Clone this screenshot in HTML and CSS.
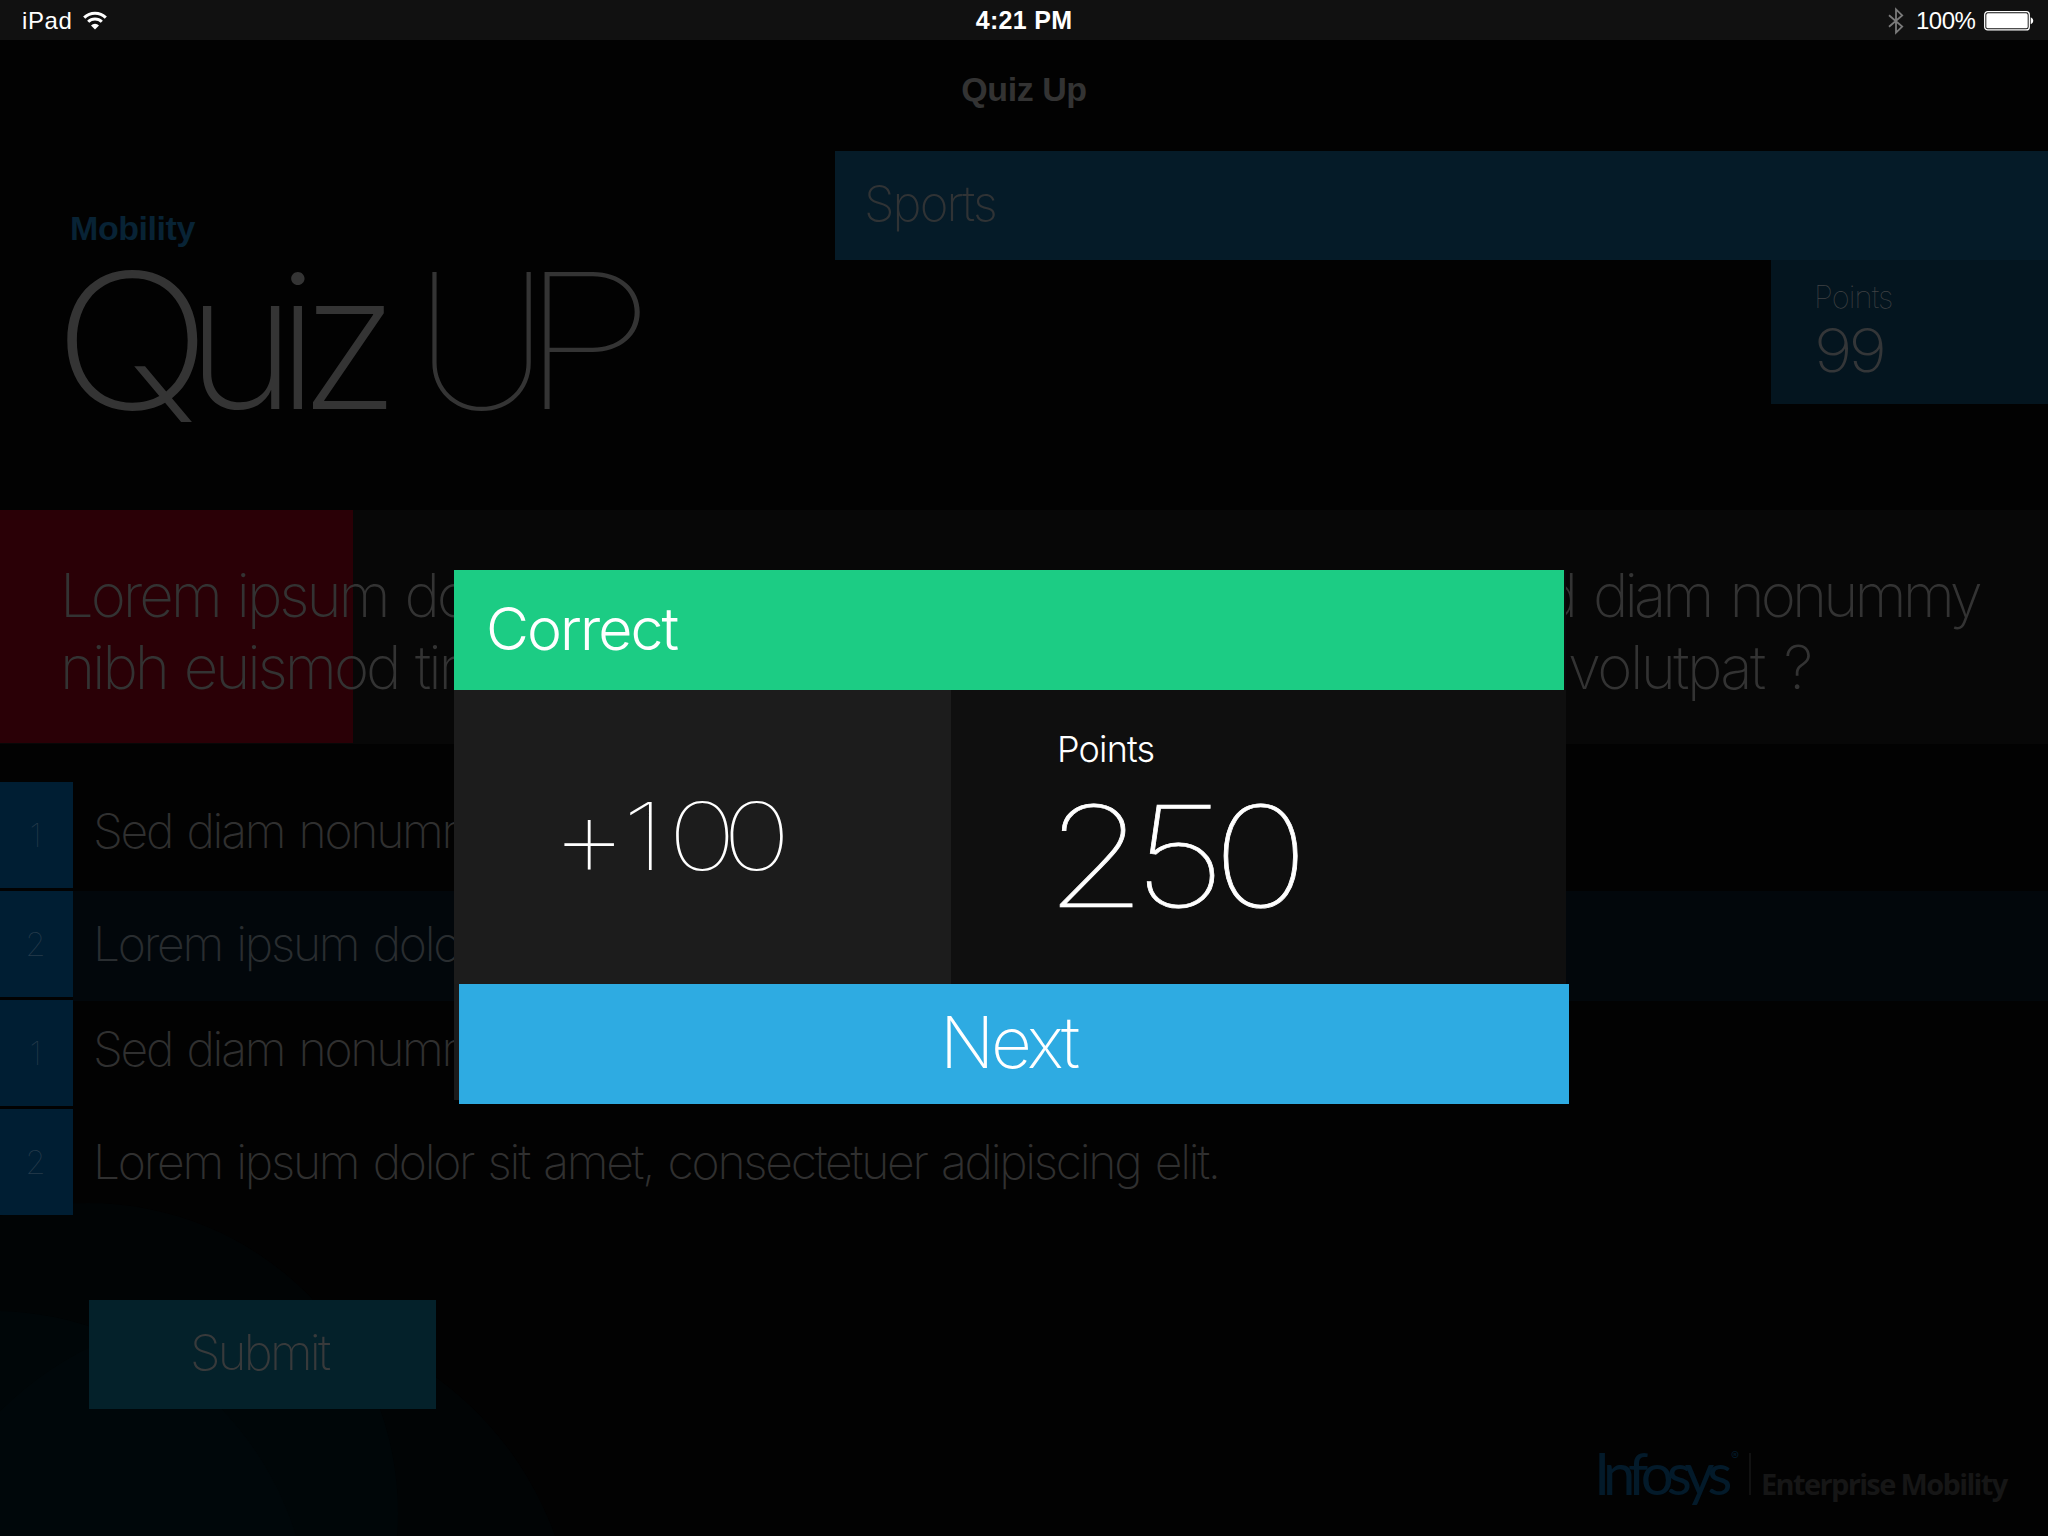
FILE: index.html
```html
<!DOCTYPE html>
<html lang="en">
<head>
<meta charset="utf-8">
<title>Quiz Up</title>
<link rel="stylesheet" href="styles.css">
</head>
<body>
<div class="screen">
  <svg class="rings" width="600" height="336" viewBox="0 1200 600 336" aria-hidden="true">
    <circle cx="88" cy="1513" r="310"/>
    <circle cx="238" cy="1650" r="337"/>
    <circle cx="-8" cy="1629" r="318"/>
  </svg>

  <div class="status">
    <div class="status-left">
      <span class="device">iPad</span>
      <svg width="24" height="19" viewBox="0 0 24 19" aria-hidden="true">
        <g fill="none" stroke="#fff" stroke-width="3">
          <path d="M1.2 6.6a15.3 15.3 0 0 1 21.6 0"/>
          <path d="M5.2 10.8a9.6 9.6 0 0 1 13.6 0"/>
        </g>
        <path fill="#fff" d="M12 18.6 8 14.5a5.7 5.7 0 0 1 8 0z"/>
      </svg>
    </div>
    <div class="time">4:21 PM</div>
    <div class="status-right">
      <svg class="bluetooth" width="16" height="28" viewBox="0 0 16 28" aria-hidden="true">
        <path d="M1 8.2 14.2 19.6 8 25.6V2.4l6.2 6L1 19.8" fill="none" stroke="#7b7b7b" stroke-width="1.8"/>
      </svg>
      <span class="charge">100%</span>
      <svg width="50" height="20" viewBox="0 0 50 20" aria-hidden="true">
        <rect x=".7" y=".7" width="44.6" height="18.2" rx="3" fill="none" stroke="#fff" stroke-width="1.3"/>
        <rect x="2.3" y="2.3" width="41.4" height="15" rx="1.6" fill="#fff"/>
        <path d="M46.7 6.3c3.4 1.4 3.4 5.6 0 7z" fill="#fff"/>
      </svg>
    </div>
  </div>

  <div class="nav">Quiz Up</div>

  <header class="header">
    <div class="brand">
      <div class="brand-sub">Mobility</div>
      <h1 class="brand-title"><span class="quiz"><span class="wide-q">Q</span>uiz</span><span class="up">U<span class="wide-p">P</span></span></h1>
    </div>
    <div class="category">
      <div class="category-name">Sports</div>
      <div class="score">
        <div class="score-label">Points</div>
        <div class="score-value">99</div>
      </div>
    </div>
  </header>

  <section class="question">
    <div class="progress"></div>
    <p class="question-text">Lorem ipsum dolor sit amet, consectetuer adipiscing elit, <span class="tight">sed diam nonummy</span><br>nibh euismod tincidunt ut laoreet dolore magna aliquam erat <span class="loose">volutpat ?</span></p>
  </section>

  <div class="answers">
    <div class="answer"><div class="num">1</div><div class="text">Sed diam nonummy</div></div>
    <div class="answer selected"><div class="num">2</div><div class="text low">Lorem ipsum dolor</div></div>
    <div class="answer"><div class="num">1</div><div class="text">Sed diam nonummy</div></div>
    <div class="answer"><div class="num">2</div><div class="text low">Lorem ipsum dolor sit amet, consectetuer adipiscing elit.</div></div>
  </div>

  <button class="submit">Submit</button>

  <footer class="footer">
    <span class="logo">Infosys</span>
    <span class="reg">®</span>
    <span class="rule"></span>
    <span class="unit">Enterprise Mobility</span>
  </footer>

  <div class="modal">
    <div class="modal-title">Correct</div>
    <div class="modal-body">
      <div class="gain"><span class="plus">+</span><span class="amount"><span class="one">1</span>00</span></div>
      <div class="total">
        <div class="total-label">Points</div>
        <div class="total-value">250</div>
      </div>
    </div>
    <button class="next">Next</button>
  </div>
</div>
</body>
</html>
```
FILE: styles.css
```css
* { box-sizing: border-box; }

body {
  margin: 0;
  background: #000;
  font-family: Inter, "Liberation Sans", sans-serif;
}

h1, p { margin: 0; font-weight: inherit; }

button {
  display: block;
  border: 0;
  border-radius: 0;
  font-family: inherit;
  text-align: left;
}

.screen {
  position: relative;
  isolation: isolate;
  width: 2048px;
  height: 1536px;
  overflow: hidden;
  background: #020202;
  white-space: nowrap;
}

.rings {
  position: absolute;
  left: 0;
  bottom: 0;
  z-index: -1;
  fill: rgba(2, 14, 20, .2);
}

/* Status bar */
.status {
  display: grid;
  grid-template-columns: 1fr auto 1fr;
  height: 40px;
  padding: 0 14px 0 22px;
  background: #111;
  color: #fff;
  font: 400 24px/41px "Liberation Sans", Arial, sans-serif;
}

.status-left, .status-right { display: flex; align-items: center; }
.status-right { justify-content: flex-end; }
.device { width: 61px; letter-spacing: .6px; }
.time { font-size: 25px; font-weight: 700; letter-spacing: .3px; margin-left: -8px; }
.charge { width: 68px; margin-left: 12px; letter-spacing: -.5px; }

.nav {
  height: 111px;
  font: 700 34px/98px "Liberation Sans", Arial, sans-serif;
  letter-spacing: -.44px;
  text-align: center;
  color: #333;
}

/* Header */
.header { display: flex; height: 359px; }
.brand { width: 835px; padding-top: 57px; }

.brand-sub {
  padding-left: 70px;
  font: 700 34px/40px "Liberation Sans", Arial, sans-serif;
  letter-spacing: -.43px;
  color: #082335;
}

.brand-title {
  display: grid;
  grid-template-columns: 359px auto;
  margin-top: 13px;
  padding-left: 53px;
  font-size: 188px;
  line-height: 160px;
  color: #343434;
}

.quiz { font-weight: 200; letter-spacing: -19.5px; }
.up { font-weight: 100; letter-spacing: -9.1px; padding-left: 2px; }
.wide-q { display: inline-block; margin-right: 11px; transform: scaleX(1.12); transform-origin: left; }
.wide-p { display: inline-block; margin-left: -21px; transform: scaleX(1.2); transform-origin: left; }

.category { display: flex; flex-direction: column; align-items: flex-end; flex: 1; }

.category-name {
  width: 100%;
  height: 109px;
  padding-left: 29px;
  background: #051b28;
  color: #303335;
  font-size: 49px;
  font-weight: 200;
  line-height: 106px;
  letter-spacing: -1.9px;
}

.score {
  width: 277px;
  height: 144px;
  padding: 16px 0 0 43px;
  background: #04151f;
  color: #343638;
}

.score-label { font-size: 31px; font-weight: 100; line-height: 41px; letter-spacing: -.9px; color: #404244; }

.score-value {
  margin-top: 1px;
  font-size: 60px;
  font-weight: 200;
  line-height: 64px;
  letter-spacing: -3.6px;
  transform: scaleX(1.1);
  transform-origin: left;
}

/* Question */
.question { position: relative; height: 234px; padding: 49px 0 0 60px; background: #070707; }

.progress {
  position: absolute;
  top: 0;
  left: 0;
  width: 353px;
  height: 233px;
  background: #2a0006;
}

.question-text {
  position: relative;
  font-size: 60px;
  font-weight: 200;
  line-height: 72px;
  letter-spacing: -3.1px;
  word-spacing: 3px;
  color: #333;
}

.tight { margin-left: 24px; letter-spacing: -3.95px; word-spacing: 6px; }
.loose { margin-left: 11px; letter-spacing: -2.6px; word-spacing: 6px; }

/* Answers */
.answers { margin-top: 38px; }
.answer { display: grid; grid-template-columns: 73px 1fr; height: 109px; }

.num {
  height: 106px;
  padding-right: 2px;
  background: #001e33;
  color: #263b4b;
  font-size: 33px;
  font-weight: 100;
  line-height: 106px;
  text-align: center;
}

.text {
  height: 110px;
  padding-left: 20px;
  font-size: 48px;
  font-weight: 200;
  line-height: 97px;
  letter-spacing: -2.25px;
  word-spacing: 3.1px;
  color: #303030;
}

.text.low { line-height: 106px; }
.selected .text { background: #02070b; color: #292d30; }

.submit {
  width: 347px;
  height: 109px;
  margin: 82px 0 0 89px;
  padding: 0 0 4px 101px;
  background: #04212a;
  color: #383a3b;
  font-size: 49px;
  font-weight: 200;
  line-height: 105px;
  letter-spacing: -2.76px;
}

/* Company mark */
.footer {
  display: grid;
  grid-template-columns: 137px 18px 2px auto;
  margin-top: 33px;
  padding-left: 1594px;
  line-height: 60px;
}

.logo { font: 400 58px/62px Lato, sans-serif; letter-spacing: -6.8px; color: #031a2a; }
.reg { font-size: 12px; line-height: 28px; color: #031a2a; }
.rule { height: 42px; margin-top: 11px; background: #111; }
.unit { padding: 12px 0 0 10px; font: 700 29px/60px "Open Sans", sans-serif; letter-spacing: -1.65px; color: #161616; }

/* Result dialog */
.modal {
  position: absolute;
  left: 454px;
  top: 570px;
  width: 1112px;
  height: 530px;
  background: linear-gradient(90deg, #1b1b1b 5px, #0b0b0b 5px);
  color: #fff;
}

.modal-title {
  width: 1110px;
  height: 120px;
  padding-left: 32px;
  background: #1ccc84;
  font-size: 59px;
  font-weight: 300;
  line-height: 117px;
  letter-spacing: -1.94px;
}

.modal-body { display: grid; grid-template-columns: 497px 615px; height: 294px; }

.gain {
  display: flex;
  padding-left: 97px;
  background: #1c1c1c;
  font-size: 94px;
  font-weight: 100;
  line-height: 292px;
}

.plus { width: 71px; font-size: 120px; line-height: 291px; }
.amount { letter-spacing: -11.6px; transform: scaleX(1.24); transform-origin: left; }
.one { letter-spacing: 2.4px; }
.total { padding-top: 39px; background: #0f0f0f; }
.total-label { padding-left: 106px; font-size: 36px; font-weight: 300; line-height: 40px; letter-spacing: -.84px; }

.total-value {
  margin: 27px 0 0 94px;
  font-size: 140px;
  font-weight: 100;
  line-height: 120px;
  letter-spacing: -11.4px;
  -webkit-text-stroke: .7px #fff;
  transform: scaleX(1.17);
  transform-origin: left;
}

.next {
  width: 1110px;
  height: 120px;
  margin-left: 5px;
  padding: 0 0 4px 481px;
  background: #2eabe2;
  color: #fff;
  font-size: 71px;
  font-weight: 200;
  line-height: 116px;
  letter-spacing: -3.38px;
}
```
